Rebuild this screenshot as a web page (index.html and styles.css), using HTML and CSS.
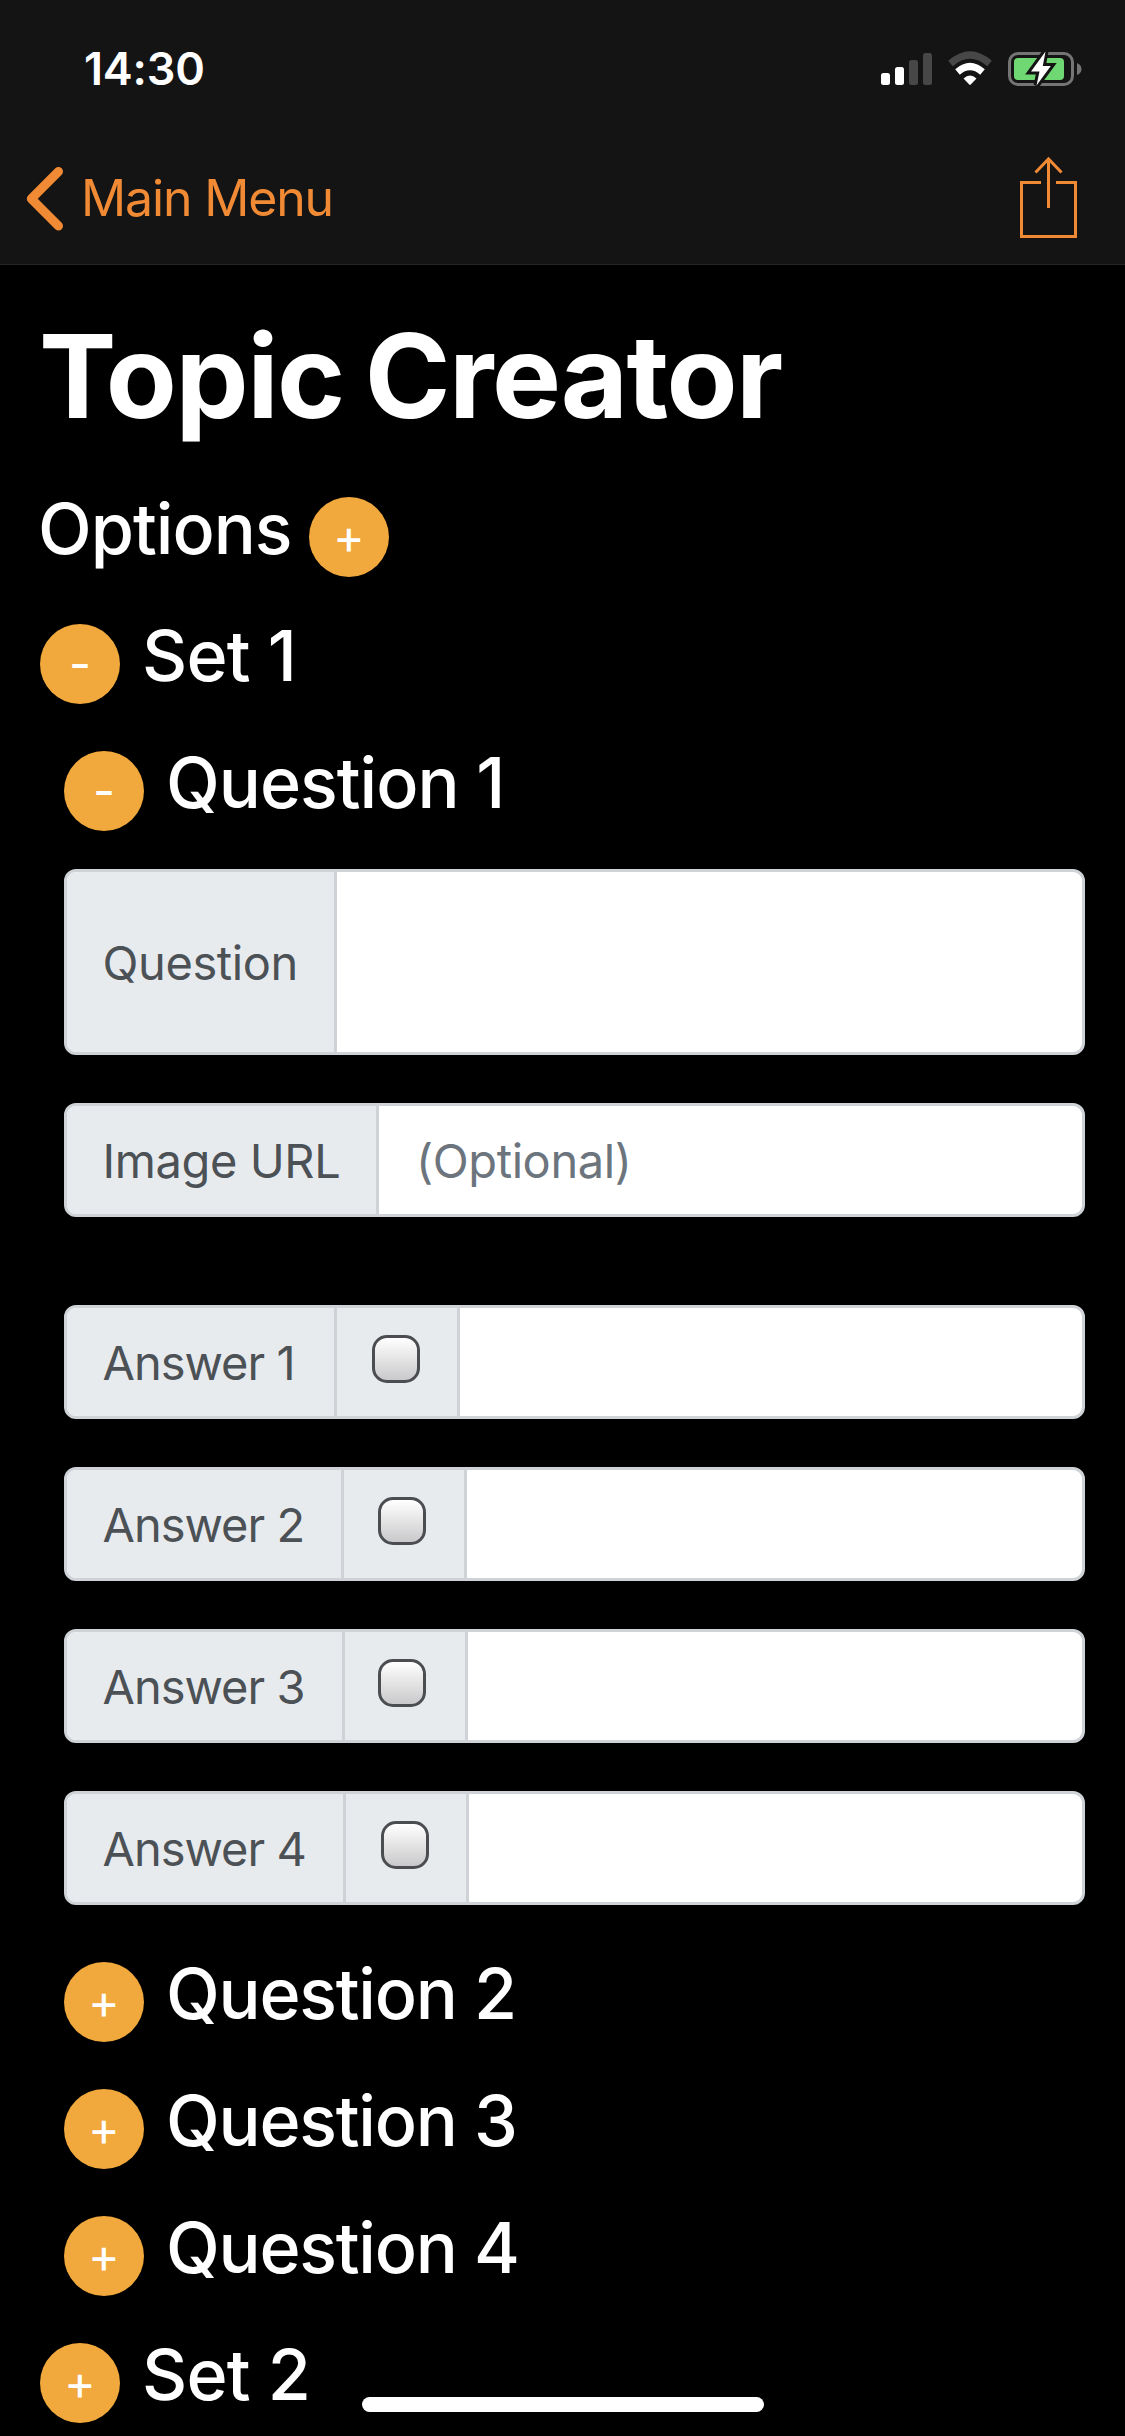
FILE: index.html
```html
<!DOCTYPE html>
<html lang="en">
<head>
<meta charset="utf-8">
<title>Topic Creator</title>
<link rel="stylesheet" href="styles.css">
</head>
<body>
<header class="topbar">
  <div class="status">
    <span class="time">14:30</span>
    <svg class="status-icons" width="206" height="44" viewBox="878 46 206 44" aria-hidden="true">
      <g fill="#fff">
        <rect x="881" y="73" width="9" height="12" rx="2.5"/>
        <rect x="895" y="67" width="9" height="18" rx="2.5"/>
      </g>
      <g fill="#474747">
        <rect x="909" y="60" width="9" height="25" rx="2.5"/>
        <rect x="923" y="53" width="9" height="32" rx="2.5"/>
      </g>
      <path d="M950.500 63.500 Q970 46.500 989.500 63.500" fill="none" stroke="#474747" stroke-width="7"/>
      <path d="M957.500 72 Q970 61 982.500 72" fill="none" stroke="#fff" stroke-width="7"/>
      <path d="M963.500 78.500 Q970 72.500 976.500 78.500 L971 84.300 Q970 85.300 969 84.300Z" fill="#fff"/>
      <rect x="1009.500" y="53.500" width="63" height="31" rx="8.500" fill="none" stroke="#757575" stroke-width="3"/>
      <path d="M1077 63 Q1081.500 65 1081.500 69 Q1081.500 73 1077 75Z" fill="#757575"/>
      <rect x="1014" y="58" width="50" height="22" rx="4" fill="#70d873"/>
      <path d="M1045.500 51.500 L1031 71.500 H1039.500 L1036.500 85.500 L1050.800 66 H1042.800Z" fill="#fff" stroke="#141414" stroke-width="6" paint-order="stroke"/>
    </svg>
  </div>
  <nav class="nav">
    <a class="back">
      <svg width="38" height="64" viewBox="0 0 38 64" aria-hidden="true"><path d="M33.500 4.500 L6.300 31.700 L33.500 59" fill="none" stroke="#f18a34" stroke-width="9" stroke-linecap="round" stroke-linejoin="round"/></svg>
      <span class="back-label">Main Menu</span>
    </a>
    <svg width="57" height="84" viewBox="1020 155 57 84" fill="none" stroke="#f18a34" stroke-width="3" aria-hidden="true">
      <path d="M1041 182.500 H1021.500 V236.500 H1075.500 V182.500 H1056 M1048.500 208 V159 M1035.500 172.500 L1048.500 159 L1061.500 172.500"/>
    </svg>
  </nav>
</header>

<main class="page">
  <h1 class="title">Topic Creator</h1>

  <div class="row"><h2 class="options-heading">Options</h2><button class="toggle">+</button></div>
  <div class="row"><button class="toggle">-</button><h2 class="heading set-heading">Set 1</h2></div>

  <section class="set">
    <div class="row"><button class="toggle">-</button><h2 class="heading first">Question 1</h2></div>

    <div class="group tall"><span class="label w-question">Question</span><div class="field"></div></div>
    <div class="group image"><span class="label w-image">Image URL</span><div class="field placeholder">(Optional)</div></div>

    <div class="group"><span class="label answer w-one">Answer 1</span><span class="check"><i class="box"></i></span><div class="field"></div></div>
    <div class="group"><span class="label answer w-two">Answer 2</span><span class="check"><i class="box box-two"></i></span><div class="field"></div></div>
    <div class="group"><span class="label answer w-three">Answer 3</span><span class="check"><i class="box box-three"></i></span><div class="field"></div></div>
    <div class="group last"><span class="label answer w-four">Answer 4</span><span class="check"><i class="box"></i></span><div class="field"></div></div>

    <div class="row"><button class="toggle">+</button><h2 class="heading">Question 2</h2></div>
    <div class="row"><button class="toggle">+</button><h2 class="heading">Question 3</h2></div>
    <div class="row"><button class="toggle">+</button><h2 class="heading">Question 4</h2></div>
  </section>

  <div class="row"><button class="toggle">+</button><h2 class="heading set-heading">Set 2</h2></div>
</main>
<div class="home-bar"></div>
</body>
</html>
```
FILE: styles.css
```css
* { box-sizing: border-box; margin: 0; padding: 0; }

body {
  width: 1125px;
  height: 2436px;
  overflow: hidden;
  position: relative;
  background: #000;
  color: #fff;
  font-family: Inter, "Liberation Sans", sans-serif;
}

.topbar {
  height: 265px;
  background: #141414;
  border-bottom: 1px solid #262626;
}

.status {
  height: 132px;
  padding: 46px 41px 0 84px;
  display: flex;
  justify-content: space-between;
}

.status-icons { display: block; }

.time {
  font-size: 45px;
  line-height: 46px;
  font-weight: 600;
  letter-spacing: -0.2px;
}

.nav {
  height: 132px;
  padding: 23px 48px 0 25px;
  display: flex;
  justify-content: space-between;
  align-items: flex-start;
}

.back {
  display: flex;
  padding-top: 12px;
  gap: 18px;
  color: #f18a34;
}

.back-label {
  font-size: 50px;
  line-height: 62px;
  letter-spacing: -1.15px;
}

.page { padding: 0 40px; }

.title {
  height: 232px;
  margin-left: -1px;
  padding-top: 39px;
  font-size: 116px;
  line-height: 144px;
  font-weight: 700;
  letter-spacing: -1.9px;
  letter-spacing: -1.5px;
  word-spacing: -5px;
  white-space: nowrap;
}

.row {
  height: 127px;
  display: flex;
  align-items: flex-start;
}

.options-heading,
.heading {
  font-size: 70px;
  line-height: 84px;
  margin-top: -10px;
  font-weight: 500;
  letter-spacing: -1.25px;
  white-space: nowrap;
}

.options-heading { width: 271px; margin-left: -2px; letter-spacing: -1px; }
.heading { margin-left: 22px; }
.first { letter-spacing: -1px; }
.set-heading { letter-spacing: -0.75px; }

.toggle {
  flex: none;
  width: 80px;
  height: 80px;
  border: 0;
  border-radius: 50%;
  background: #f1a83c;
  color: #fff;
  font: 400 48px/74px Inter, "Liberation Sans", sans-serif;
  text-align: center;
}

.set { padding-left: 24px; }

.group {
  display: flex;
  width: 1021px;
  height: 114px;
  margin-bottom: 48px;
  border: 3px solid #cfd3d7;
  border-radius: 12px;
  overflow: hidden;
  background: #fff;
}

.tall { height: 186px; margin-top: -9px; }
.image { margin-bottom: 88px; }
.last { margin-bottom: 57px; }

.label,
.check {
  flex: none;
  display: flex;
  background: #e8ebee;
  border-right: 3px solid #cfd3d7;
}

.label {
  align-items: center;
  padding-left: 35.500px;
  color: #4c5156;
  font-size: 47px;
  letter-spacing: -0.4px;
  white-space: nowrap;
}

.answer { letter-spacing: -1px; }

.w-question, .w-one { width: 270px; }
.w-image { width: 312px; }
.w-two { width: 277px; }
.w-three { width: 278px; }
.w-four { width: 279px; }

.check { width: 123px; padding: 27px 0 0 35px; }

.box {
  width: 48px;
  height: 48px;
  border: 3px solid #4b4d50;
  border-radius: 15px;
  background: linear-gradient(#fff, #c9c9cb);
}

.box-two { margin-left: -1px; }
.box-three { margin-left: -2px; }

.field { flex: 1; }

.placeholder {
  display: flex;
  align-items: center;
  padding-left: 37px;
  color: #6c757d;
  font-size: 47px;
  letter-spacing: -0.4px;
}

.home-bar {
  position: absolute;
  left: 362px;
  top: 2397px;
  width: 402px;
  height: 15px;
  border-radius: 8px;
  background: #fff;
}
```
